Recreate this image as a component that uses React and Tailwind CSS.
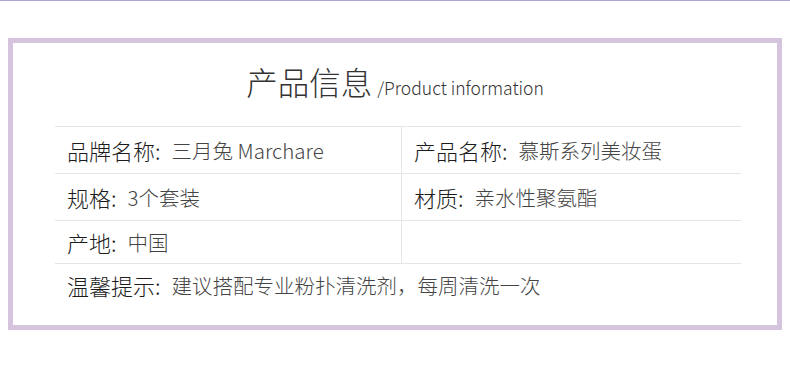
export default function App() {
  const font = { fontFamily: '"Noto Sans CJK SC", "Noto Sans", sans-serif' };
  const Cell = ({ label, value, className = "" }) => (
    <div className={"flex items-center pl-[12px] " + className}>
      {label ? (
        <span className="text-[22px] text-[#1c1c1c] font-light whitespace-nowrap">{label}:</span>
      ) : null}
      <span className="ml-[11px] text-[20.5px] text-[#444] font-light whitespace-nowrap">{value}</span>
    </div>
  );
  return (
    <div className="w-[790px] h-[365px] bg-white" style={font}>
      <div className="h-px bg-[#aba4d4]" />
      <div className="mt-[37px] ml-[8px] w-[774px] h-[292px] border-[5px] border-[#d6c4df]">
        <div className="h-[83px] pb-[5px] flex items-center justify-center">
          <div className="flex items-baseline text-[#333] font-light leading-none">
            <span className="text-[31.5px]">产品信息</span>
            <span className="text-[17.5px] ml-[5px]">/Product information</span>
          </div>
        </div>
        <div className="ml-[42px] w-[686px]">
          <div className="flex h-[47px] border-t border-[#e6e6e6]">
            <Cell className="w-[347px] border-r border-[#e6e6e6]" label="品牌名称" value="三月兔 Marchare" />
            <Cell className="flex-1" label="产品名称" value="慕斯系列美妆蛋" />
          </div>
          <div className="flex h-[47px] border-t border-[#e6e6e6]">
            <Cell className="w-[347px] border-r border-[#e6e6e6]" label="规格" value="3个套装" />
            <Cell className="flex-1" label="材质" value="亲水性聚氨酯" />
          </div>
          <div className="flex h-[43px] border-t border-[#e6e6e6]">
            <Cell className="w-[347px] border-r border-[#e6e6e6]" label="产地" value="中国" />
            <Cell className="flex-1" label="" value="" />
          </div>
          <div className="flex h-[44px] border-t border-[#e6e6e6]">
            <Cell className="flex-1" label="温馨提示" value="建议搭配专业粉扑清洗剂，每周清洗一次" />
          </div>
        </div>
      </div>
    </div>
  );
}
